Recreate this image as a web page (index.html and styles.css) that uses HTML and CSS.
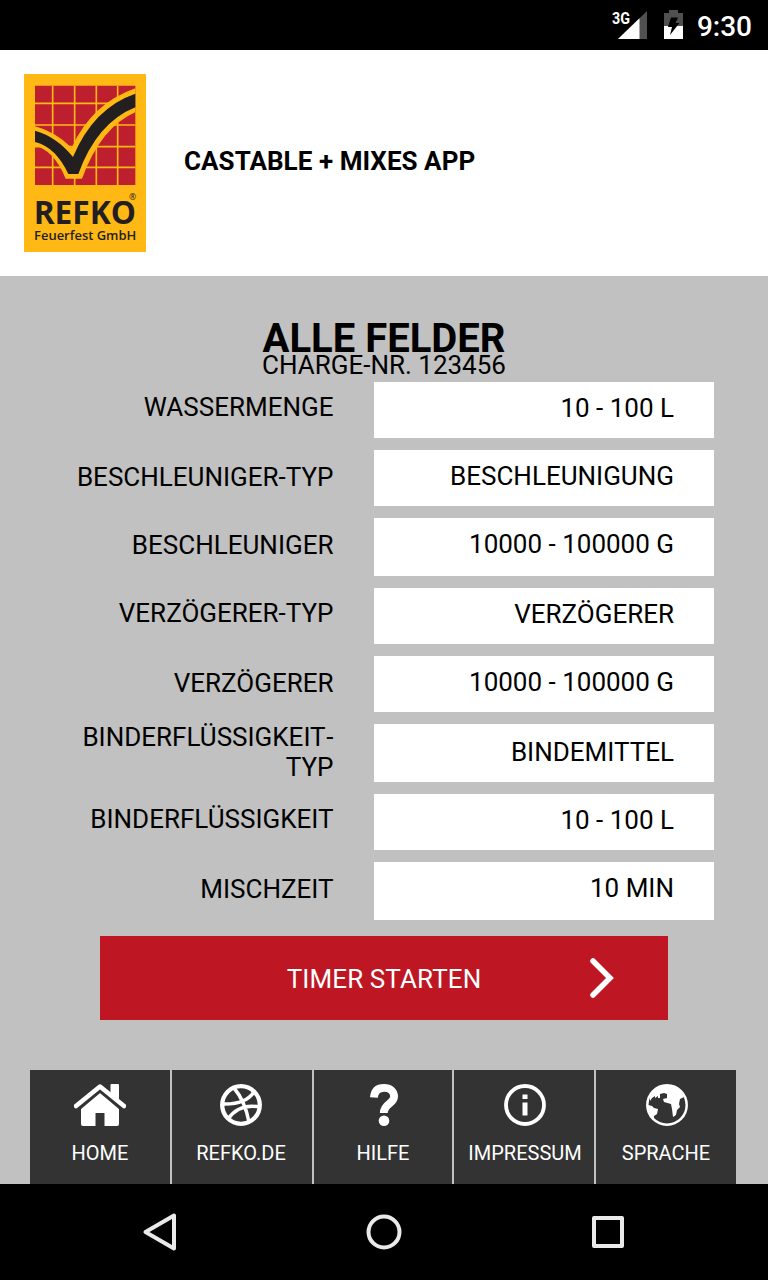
FILE: index.html
```html
<!DOCTYPE html>
<html lang="de">
<head>
<meta charset="utf-8">
<title>Castable + Mixes App</title>
<link rel="stylesheet" href="styles.css">
</head>
<body>
<div class="status">
  <svg class="signal" width="36" height="30" viewBox="0 0 36 30">
    <path d="M35 0V28H6Z" fill="#505050"/><path d="M27.500 7.200V28H6Z" fill="#fff"/>
    <text class="net" x="0" y="12.500" textLength="18" lengthAdjust="spacingAndGlyphs">3G</text>
  </svg>
  <svg class="battery" width="19" height="29" viewBox="0 0 19 29">
    <path d="M0 3H5V0H14V3H19V29H0Z" fill="#505050"/><path d="M0 16H19V29H0Z" fill="#fff"/>
    <path d="M7 7.500H14L11.500 13H15.500L6 25L8 17H4Z" fill="#000"/>
  </svg>
  <span class="clock">9:30</span>
</div>
<header class="header">
  <svg class="logo" width="122" height="178" viewBox="24 24 366 534">
    <path fill="#ffb814" d="M24 24H390V558H24Z"/>
    <path fill="#be1f2e" d="M57 59H358V357H57Z"/>
    <path d="M110 59V357M176 59V357M241 59V357M305 59V357M57 112H358M57 177H358M57 242H358M57 304H358" stroke="#ffb814" stroke-width="5"/>
    <path d="M57 181Q114 195 167 245Q228 112 358 67V139Q255 183 198 338H149Q113 251 57 240Z" fill="#ffb814"/>
    <path d="M57 194Q122 212 171 273Q232 126 358 83V124Q243 170 187 324H157Q119 243 57 228Z" fill="#231f20"/>
    <text class="logo-name" x="53" y="475" textLength="307" lengthAdjust="spacingAndGlyphs">REFKO</text>
    <text class="logo-sub" x="54" y="523" textLength="307" lengthAdjust="spacingAndGlyphs">Feuerfest GmbH</text>
    <text class="logo-reg" x="339" y="403">®</text>
  </svg>
  <h1 class="app-title">CASTABLE + MIXES APP</h1>
</header>
<main class="main">
  <h2 class="title">ALLE FELDER</h2>
  <p class="charge">CHARGE-NR. 123456</p>
  <div class="fields">
    <div class="row"><div class="label up">WASSERMENGE</div><div class="value">10 - 100 L</div></div>
    <div class="row"><div class="label">BESCHLEUNIGER-TYP</div><div class="value">BESCHLEUNIGUNG</div></div>
    <div class="row tall"><div class="label">BESCHLEUNIGER</div><div class="value">10000 - 100000 G</div></div>
    <div class="row"><div class="label up">VERZÖGERER-TYP</div><div class="value">VERZÖGERER</div></div>
    <div class="row"><div class="label">VERZÖGERER</div><div class="value">10000 - 100000 G</div></div>
    <div class="row tall"><div class="label double">BINDERFLÜSSIGKEIT<span class="hyphen">-</span><br>TYP</div><div class="value low">BINDEMITTEL</div></div>
    <div class="row"><div class="label up">BINDERFLÜSSIGKEIT</div><div class="value">10 - 100 L</div></div>
    <div class="row tall"><div class="label">MISCHZEIT</div><div class="value">10 MIN</div></div>
  </div>
  <div class="start"><span class="start-text">TIMER STARTEN</span>
    <svg class="chevron" width="26" height="42" viewBox="0 0 26 42"><path d="M4 4L21 21L4 38" fill="none" stroke="#fff" stroke-width="5.500" stroke-linecap="round"/></svg>
  </div>
  <nav class="tabs">
    <div class="tab">
      <svg width="52" height="42" viewBox="0 0 52 42" fill="#fff"><path d="M26 8L45 23.500V40Q45 42 43 42H30.500V29H21.500V42H9Q7 42 7 40V23.500Z"/><path d="M36.500 1Q36.500 0 37.500 0H44Q45 0 45 1V16L36.500 9Z"/><path d="M4 25L26 6.500L48 25" fill="none" stroke="#333" stroke-width="4"/><path d="M2 22L26 2.500L50 22" fill="none" stroke="#fff" stroke-width="4.500" stroke-linecap="round" stroke-linejoin="round"/></svg>
      <span>HOME</span></div>
    <div class="tab nudge-left">
      <svg width="42" height="42" viewBox="0 0 42 42" fill="none" stroke="#fff" stroke-width="3.500"><circle cx="21" cy="21" r="18.800" stroke-width="4.300"/><path d="M14 4Q25 17 29 38M2 20Q25 21 34 8M8 35Q19 19 40 23"/></svg>
      <span>REFKO.DE</span></div>
    <div class="tab narrow">
      <svg class="shift" width="30" height="42" viewBox="0 0 30 42"><path d="M4.900 13.500C5.400 7 9 3.900 15 3.900C21 3.900 25.100 7 25.100 12.500C25.100 20 14.800 19.500 14.800 29" fill="none" stroke="#fff" stroke-width="7.800"/><circle cx="15" cy="36.700" r="5.300" fill="#fff"/></svg>
      <span>HILFE</span></div>
    <div class="tab nudge-right">
      <svg width="42" height="42" viewBox="0 0 42 42"><circle cx="21" cy="21" r="19" fill="none" stroke="#fff" stroke-width="3.800"/><path d="M18.500 10.500H23.500V15H18.500ZM18.500 18.500H23.500V31.500H18.500Z" fill="#fff"/></svg>
      <span>IMPRESSUM</span></div>
    <div class="tab">
      <svg class="shift" width="42" height="42" viewBox="0 0 42 42"><circle cx="21" cy="21" r="19.700" fill="none" stroke="#fff" stroke-width="2.500"/><path d="M4 13Q10 1 22 1Q33 2 38 13L34 15L33 20L34 23L31 26L30 31L27 33L26 25L25 20L18 18L17 15L21 14V10L18 9L14 10V14L12 14V12L9 14V12L6 14L4 17ZM2 21L6 22L8 24L12 25L11 30L8 32L8 35Q2 30 1 22Z" fill="#fff"/></svg>
      <span>SPRACHE</span></div>
  </nav>
</main>
<div class="navbar">
  <svg width="40" height="40" viewBox="0 0 40 40"><path d="M34 3.500V36.500L5.500 20Z"/></svg>
  <svg width="40" height="40" viewBox="0 0 40 40"><circle cx="20" cy="20" r="15.500"/></svg>
  <svg width="40" height="40" viewBox="0 0 40 40"><rect x="6" y="6" width="28" height="28"/></svg>
</div>
</body>
</html>
```
FILE: styles.css
```css
* { box-sizing: border-box; margin: 0; padding: 0; }
body { width: 768px; height: 1280px; overflow: hidden; background: #c1c1c1; color: #000; font-family: Roboto, sans-serif; font-size: 26px; line-height: 30px; }
svg { display: block; flex: none; }
.status { height: 50px; background: #000; color: #fff; display: flex; align-items: flex-start; justify-content: flex-end; padding: 11px 16px 0 0; }
.signal { overflow: visible; }
.net { font: 700 16px Roboto, sans-serif; fill: #fff; }
.battery { margin: -1px 14px 0 16px; }
.clock { font-size: 28px; font-weight: 500; line-height: 32px; }
.header { height: 226px; background: #fff; display: flex; align-items: center; padding-left: 24px; gap: 38px; }
.logo-name { font: 700 97px "Open Sans", sans-serif; fill: #231f20; }
.logo-sub { font: 600 37px "Open Sans", sans-serif; fill: #231f20; }
.logo-reg { font: 26px "Open Sans", sans-serif; fill: #231f20; }
.app-title { font-size: 26px; font-weight: 700; line-height: 30px; padding-bottom: 4px; letter-spacing: 0.05px; }
.main { height: 908px; padding-top: 42px; }
.title { font-size: 40px; font-weight: 700; line-height: 42px; height: 42px; text-align: center; }
.charge { height: 22px; line-height: 10px; text-align: center; }
.fields { width: 714px; }
.row { display: flex; height: 56px; margin-bottom: 12px; gap: 40px; }
.row.tall { height: 58px; }
.label { width: 334px; text-align: right; padding: 12px 0.5px 0 0; white-space: nowrap; }
.label.up { padding-top: 10px; }
.label.double { padding-top: 0; margin-top: -2px; }
.hyphen { margin-left: 0.7px; }
.value { width: 340px; background: #fff; text-align: right; padding: 11px 40px 0 0; }
.value.low { padding-top: 13px; }
.start { width: 568px; height: 84px; margin: 16px 0 50px 100px; background: #be1622; color: #fff; display: grid; grid-template-columns: 1fr auto 1fr; align-items: center; }
.row:last-child { margin-bottom: 0; }
.start-text { grid-column: 2; padding-top: 2px; letter-spacing: 0.1px; }
.chevron { justify-self: end; margin-right: 53px; }
.tabs { display: flex; gap: 2px; margin-left: 30px; width: 706px; height: 114px; }
.tab { width: 140px; display: flex; flex-direction: column; align-items: center; background: #333; color: #fff; padding-top: 14px; gap: 15px; font-size: 20px; line-height: 24px; }
.tab.narrow { width: 138px; }
.tab.nudge-left { padding-right: 2px; }
.tab.nudge-right { padding-left: 2px; }
.shift { margin-left: 2px; }
.navbar { height: 96px; background: #000; display: flex; justify-content: center; align-items: center; gap: 184px; }
.navbar svg { fill: none; stroke: #eaeaea; stroke-width: 4; stroke-linejoin: round; }
```
